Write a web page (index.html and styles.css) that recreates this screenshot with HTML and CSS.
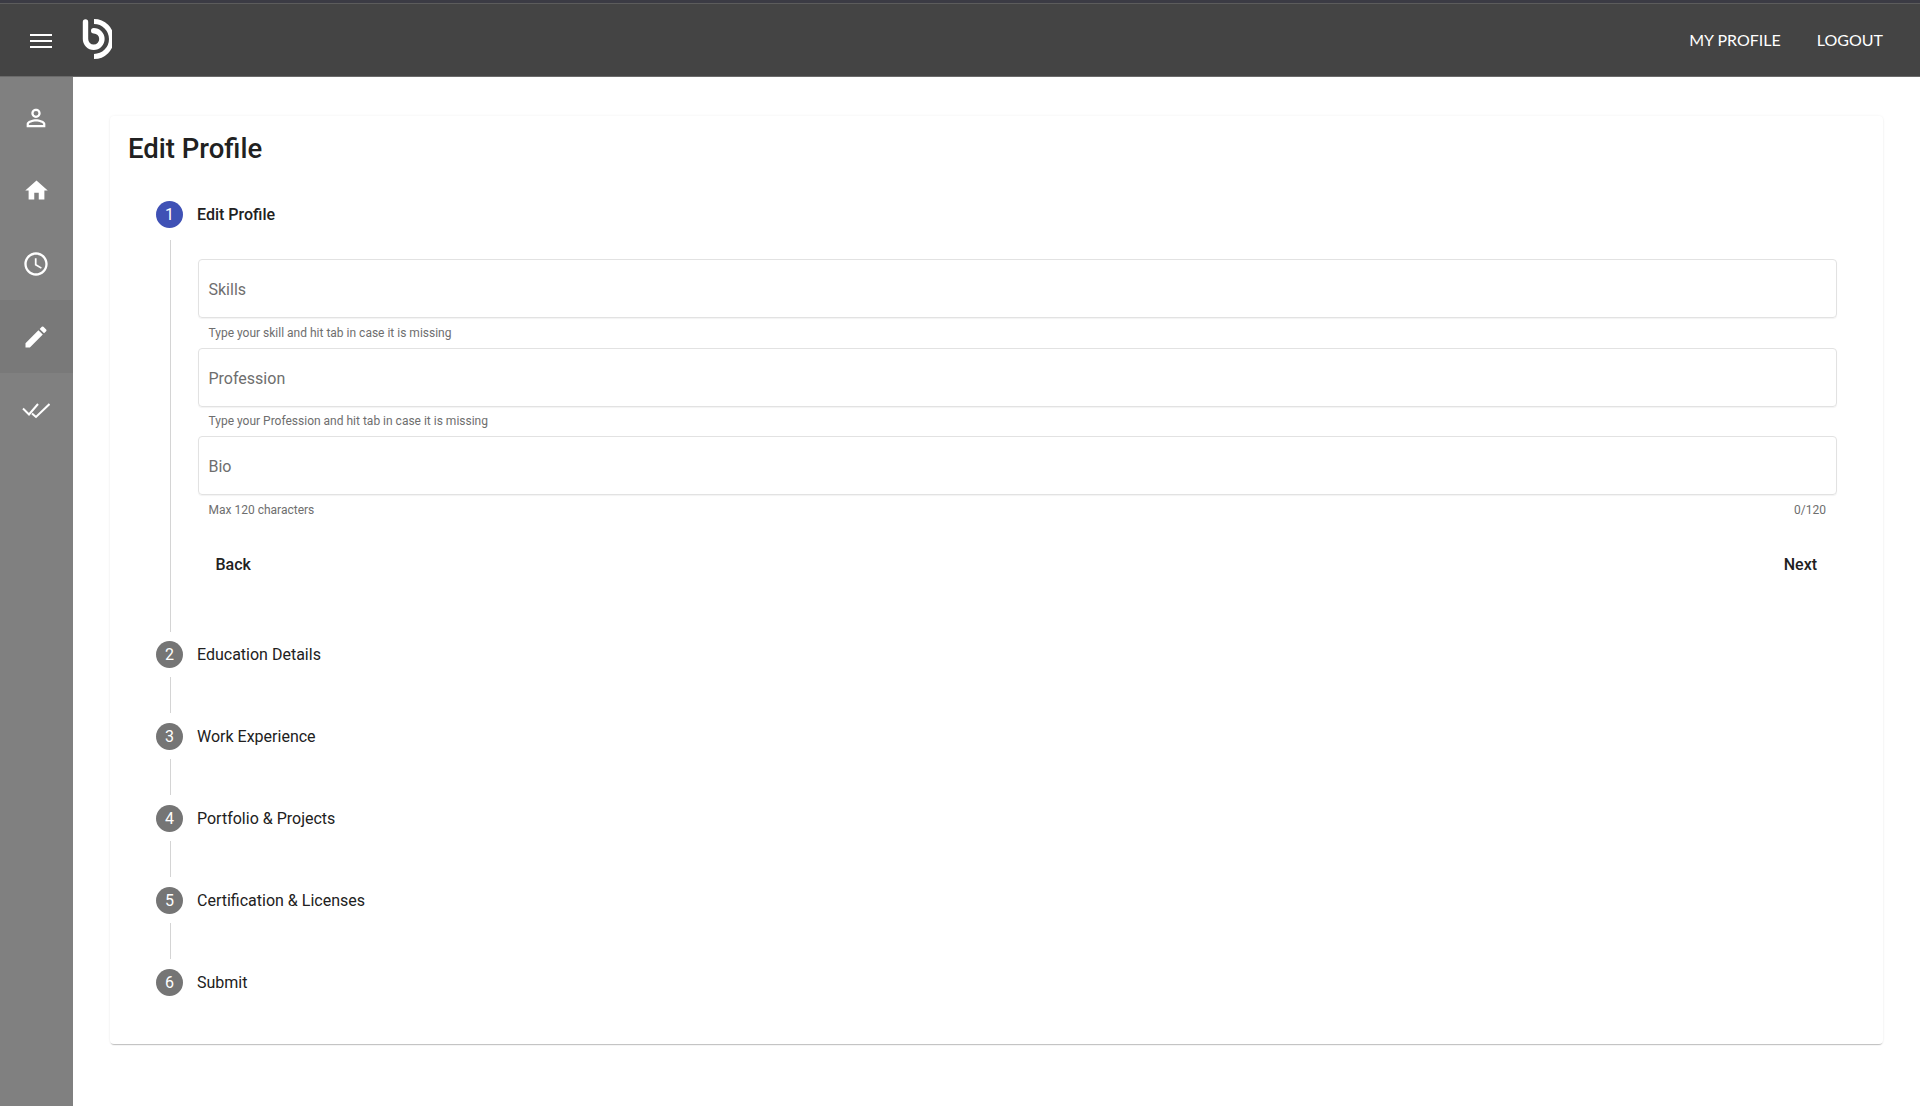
FILE: index.html
```html
<!DOCTYPE html>
<html lang="en">
<head>
<meta charset="utf-8">
<title>Edit Profile</title>
<link rel="stylesheet" href="styles.css">
</head>
<body>
<header class="topbar">
  <div class="topbar-left">
    <svg class="menu-icon" viewBox="0 0 22 16" width="22" height="16"><path d="M0 2h22M0 8h22M0 14h22" stroke="#fff" stroke-width="2" fill="none"/></svg>
    <svg class="logo" viewBox="0 0 30 40" width="30" height="40"><path d="M3.5 3V20a8.2 8.2 0 1 0 8.2-8.2" stroke="#fff" stroke-width="5.4" stroke-linecap="round" fill="none"/><path d="M12 2.5a16.5 16.5 0 0 1 0 35" stroke="#fff" stroke-width="5" fill="none"/></svg>
  </div>
  <nav class="topnav"><a>MY PROFILE</a><a>LOGOUT</a></nav>
</header>
<div class="body-row">
  <aside class="sidebar">
    <div class="side-item"><svg viewBox="0 0 24 24" width="28" height="28"><path fill="#fff" d="M12 5.9a2.1 2.1 0 1 1 0 4.2 2.1 2.1 0 0 1 0-4.2m0 9c2.97 0 6.1 1.46 6.1 2.1v1.1H5.9V17c0-.64 3.13-2.1 6.1-2.1M12 4C9.79 4 8 5.79 8 8s1.79 4 4 4 4-1.79 4-4-1.79-4-4-4zm0 9c-2.67 0-8 1.34-8 4v3h16v-3c0-2.66-5.33-4-8-4z"/></svg></div>
    <div class="side-item"><svg viewBox="0 0 24 24" width="27" height="27"><path fill="#fff" d="M10 20v-6h4v6h5v-8h3L12 3 2 12h3v8z"/></svg></div>
    <div class="side-item"><svg viewBox="0 0 24 24" width="28" height="28"><path fill="#fff" d="M11.99 2C6.47 2 2 6.48 2 12s4.47 10 9.99 10C17.52 22 22 17.52 22 12S17.52 2 11.99 2zM12 20c-4.42 0-8-3.58-8-8s3.58-8 8-8 8 3.58 8 8-3.58 8-8 8zm.5-13H11v6l5.25 3.15.75-1.23-4.5-2.67z"/></svg></div>
    <div class="side-item active"><svg viewBox="0 0 24 24" width="28" height="28"><path fill="#fff" d="M3 17.25V21h3.75L17.81 9.94l-3.75-3.75L3 17.25zM20.71 7.04a1 1 0 0 0 0-1.41l-2.34-2.34a1 1 0 0 0-1.41 0l-1.83 1.83 3.75 3.75 1.83-1.83z"/></svg></div>
    <div class="side-item"><svg viewBox="0 0 28 18" width="28" height="18"><path d="M1 7.5l6 6L16 3M10 12.5l4 3.5L27.5 3" stroke="#fff" stroke-width="2" fill="none"/></svg></div>
  </aside>
  <main class="content">
    <section class="card">
      <h1 class="title">Edit Profile</h1>
      <div class="stepper">
        <div class="step-head current"><span class="badge blue">1</span><span class="step-label">Edit Profile</span></div>
        <div class="step-body">
          <div class="field">Skills</div>
          <div class="help"><span>Type your skill and hit tab in case it is missing</span></div>
          <div class="field">Profession</div>
          <div class="help"><span>Type your Profession and hit tab in case it is missing</span></div>
          <div class="field">Bio</div>
          <div class="help"><span>Max 120 characters</span><span>0/120</span></div>
          <div class="actions"><button class="btn">Back</button><button class="btn">Next</button></div>
        </div>
        <div class="step-head"><span class="badge">2</span><span class="step-label">Education Details</span></div>
        <div class="connector"></div>
        <div class="step-head"><span class="badge">3</span><span class="step-label">Work Experience</span></div>
        <div class="connector"></div>
        <div class="step-head"><span class="badge">4</span><span class="step-label">Portfolio &amp; Projects</span></div>
        <div class="connector"></div>
        <div class="step-head"><span class="badge">5</span><span class="step-label">Certification &amp; Licenses</span></div>
        <div class="connector"></div>
        <div class="step-head"><span class="badge">6</span><span class="step-label">Submit</span></div>
      </div>
    </section>
  </main>
</div>
</body>
</html>
```
FILE: styles.css
```css
* { box-sizing: border-box; }
html, body { margin: 0; height: 100%; }
body {
  font-family: Roboto, "Liberation Sans", sans-serif;
  background: #fff;
  color: #212121;
  display: flex;
  flex-direction: column;
  height: 1106px;
  overflow: hidden;
}
.topbar {
  height: 77px;
  flex: none;
  background: #444;
  border-top: 3px solid #3b3b44;
  border-bottom: 1px solid #6a6a6a;
  box-shadow: inset 0 1px 0 #5c5c5c;
  display: flex;
  align-items: center;
  justify-content: space-between;
  padding: 0 37px 0 30px;
}
.topbar-left { display: flex; align-items: center; gap: 30px; }
.menu-icon { margin-top: 3px; }
.logo { margin-top: -1px; }
.topnav { display: flex; gap: 36px; font-family: Lato, sans-serif; font-size: 16px; color: #fff; margin-top: -1px; }
.body-row { flex: 1; display: flex; min-height: 0; }
.sidebar { width: 73px; flex: none; background: #808080; padding-top: 4px; }
.side-item { height: 73px; padding-right: 1px; display: flex; align-items: center; justify-content: center; }
.side-item.active { background: #797979; }
.content { flex: 1; padding: 39px 37px 0; }
.card {
  height: 928px;
  background: #fff;
  border-radius: 4px;
  box-shadow: 0 2px 1px -1px rgba(0,0,0,.2), 0 1px 2px 0 rgba(0,0,0,.06), 0 0 3px 0 rgba(0,0,0,.06);
  padding: 15px 18px 0;
}
.title { margin: 0; font-size: 27.5px; line-height: 36px; font-weight: 500; color: #212121; }
.stepper { padding: 33px 28px 0 28px; }
.step-head { display: flex; align-items: center; height: 28px; gap: 14px; font-size: 16px; color: #212121; }
.step-head.current .step-label { font-weight: 500; }
.badge {
  width: 27px; height: 27px; border-radius: 50%;
  background: #757575; color: #fff;
  font-size: 16px;
  display: flex; align-items: center; justify-content: center;
  flex: none;
}
.badge.blue { background: #3f51b5; }
.step-body {
  margin: 12px 0 8px 13.5px;
  padding: 19px 0 0 27px;
  height: 392px;
  border-left: 1px solid #d4d4d4;
}
.field {
  height: 59px;
  border: 1px solid #e2e2e2;
  border-radius: 4px;
  box-shadow: 0 1px 1px rgba(0,0,0,.05);
  padding: 2px 10px 0;
  display: flex;
  align-items: center;
  font-size: 16px;
  color: #6e6e6e;
}
.help {
  height: 29.5px;
  padding: 0 11px;
  display: flex;
  justify-content: space-between;
  align-items: center;
  font-size: 12px;
  color: #6e6e6e;
}
.actions { display: flex; justify-content: space-between; padding: 22px 0 0 6px; }
.btn {
  border: 0; background: none; padding: 0 12px;
  height: 36px;
  font: 500 16px Roboto, sans-serif;
  color: #212121;
  margin-right: 8px;
}
.connector { height: 36px; margin: 9px 0 9px 13.5px; border-left: 1px solid #d4d4d4; }
```
